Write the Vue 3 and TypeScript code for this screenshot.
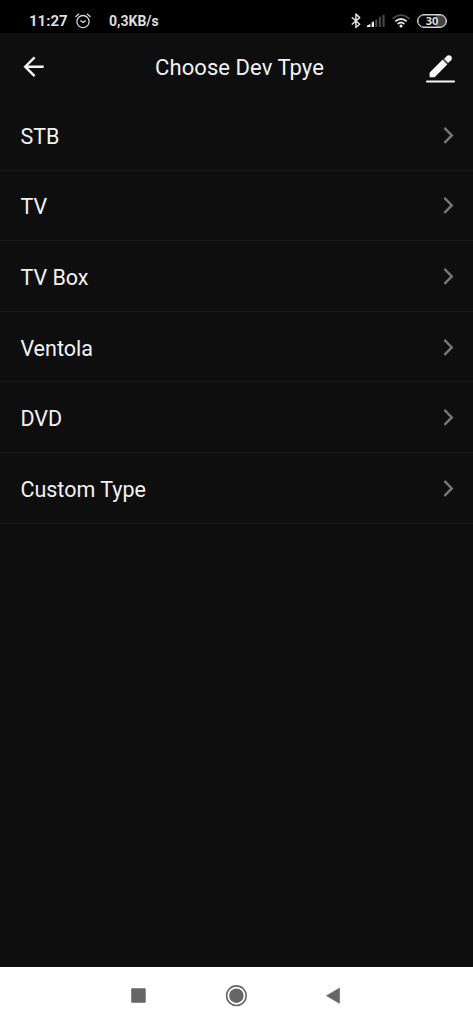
<script setup lang="ts">
const deviceTypes: string[] = ['STB', 'TV', 'TV Box', 'Ventola', 'DVD', 'Custom Type']
</script>

<template>
  <div class="screen">
    <div class="status">
      <span class="clock">11:27</span>
      <svg class="alarm" width="16" height="16" viewBox="0 0 16 16" fill="none" stroke="#d6d6d6" stroke-width="1.3" stroke-linecap="round">
        <circle cx="8" cy="8.6" r="6.1" />
        <path d="M.9 3.5 3.8 1.1M15.1 3.5 12.2 1.1M5.8 7.8 8 9.5 10.4 7.9" />
      </svg>
      <span class="speed">0,3KB/s</span>
      <div class="indicators">
        <svg width="10" height="16" viewBox="0 0 10 16" fill="none" stroke="#dedede" stroke-width="1.5" stroke-linejoin="round">
          <path d="M.8 4.3 8.7 11.2 4.9 14.5V1.1L8.7 4.6.8 11.5" />
        </svg>
        <svg class="signal" width="18" height="14" viewBox="0 0 18 14">
          <path d="M0 13V11.4L3.4 10V13Z" fill="#eee" />
          <path d="M4.6 13V8.4L7 7.2V13Z" fill="#eee" />
          <path d="M8.2 13V6L10.4 5.2V13ZM11.8 13V3.4L14 2.6V13ZM15.4 13V1.2L17.6.4V13Z" fill="#464646" />
        </svg>
        <svg class="wifi" width="18" height="14" viewBox="0 0 18 14" fill="none" stroke-width="1.8">
          <path d="M.6 4.7Q9-2.5 17.4 4.7" stroke="#484848" />
          <path d="M3.2 7.4Q9 2.5 14.8 7.4" stroke="#e2e2e2" />
          <path d="M5.6 10Q9 7.1 12.4 10" stroke="#e2e2e2" />
          <circle cx="9" cy="12" r="1.5" fill="#eee" />
        </svg>
        <div class="battery"><span>30</span></div>
      </div>
    </div>

    <header class="bar">
      <svg width="22" height="22" viewBox="0 0 22 22" fill="none" stroke="#f4f4f4" stroke-width="2.4">
        <path d="M20.7 10.7H2.4M11.6 1.3 2.2 10.7 11.6 20.1" />
      </svg>
      <h1>Choose Dev Tpye</h1>
      <svg class="edit" width="30" height="30" viewBox="0 0 30 30" fill="#f7f7f7">
        <path d="M5.2 23.7V19.8L17.6 7.4 21.6 11.4 9.2 23.7Z" stroke="#f7f7f7" stroke-width="1.2" stroke-linejoin="round" />
        <circle cx="23.9" cy="5.2" r="2.9" />
        <path d="M19 6 21.2 3.8 25.3 7.9 23.1 10.1Z" />
        <path d="M18.5 6.2 22.9 10.6" stroke="#777" stroke-width=".6" />
        <rect x="1" y="27.5" width="29" height="1.9" rx=".9" />
      </svg>
    </header>

    <ul class="list">
      <li v-for="type in deviceTypes" :key="type">
        <span>{{ type }}</span>
        <svg width="12" height="18" viewBox="0 0 12 18" fill="none" stroke="#777" stroke-width="2.4">
          <path d="M1.4 1.9 8.8 9.4 1.4 16.9" />
        </svg>
      </li>
    </ul>

    <nav class="nav">
      <svg width="16" height="16" viewBox="0 0 16 16"><rect x="1.2" y=".3" width="14.5" height="14.5" rx=".8" fill="#666" /></svg>
      <svg width="22" height="22" viewBox="0 0 22 22">
        <circle cx="11.4" cy="10.7" r="9.8" fill="none" stroke="#666" stroke-width="1.6" />
        <circle cx="11.4" cy="10.7" r="7.2" fill="#666" />
      </svg>
      <svg width="16" height="18" viewBox="0 0 16 18"><path d="M1.4 8.7 14.6 1V16.4Z" fill="#666" stroke="#666" stroke-width=".5" stroke-linejoin="round" /></svg>
    </nav>
  </div>
</template>

<style scoped>
.screen {
  display: flex;
  flex-direction: column;
  height: 1024px;
  background: #0e0e0e;
  color: #f2f2f2;
  font-family: Roboto, "Liberation Sans", sans-serif;
  overflow: hidden;
}
svg {
  display: block;
  flex: none;
}
.status {
  display: flex;
  align-items: center;
  box-sizing: border-box;
  height: 33px;
  padding: 8px 26px 0 29px;
  background: #000;
  color: #dedede;
  font-size: 15px;
  font-weight: 700;
  line-height: 18px;
}
.clock {
  width: 46px;
}
.speed {
  margin-left: 18px;
  font-size: 14px;
}
.indicators {
  display: flex;
  align-items: center;
  margin-left: auto;
}
.signal {
  margin-left: 6px;
}
.wifi {
  margin: 0 7px;
}
.battery {
  box-sizing: border-box;
  width: 30px;
  height: 14px;
  border: 1px solid #d4d4d4;
  border-radius: 7px;
  background: linear-gradient(90deg, #000 66%, #424242 66%);
  box-shadow: inset 0 0 0 0.5px #d4d4d4;
  font-family: "Open Sans", Roboto, sans-serif;
  font-size: 11px;
  line-height: 12px;
  text-align: center;
}
.bar {
  display: flex;
  align-items: center;
  justify-content: space-between;
  box-sizing: border-box;
  height: 67px;
  padding: 0 18px 0 23px;
}
.edit {
  margin: 3px 0 0;
}
h1 {
  margin: 2px 0 0 9px;
  font-size: 22px;
  font-weight: 400;
  line-height: 26px;
  letter-spacing: 0.07px;
}
.list {
  flex: 1;
  margin: 0;
  padding: 0;
  list-style: none;
}
.list li {
  display: flex;
  align-items: center;
  justify-content: space-between;
  box-sizing: border-box;
  height: 70.6px;
  padding: 0 18px 0 20.4px;
  border-bottom: 1px solid #191919;
  font-size: 21.5px;
  line-height: 26px;
}
.list span {
  padding-top: 4px;
}
.nav {
  display: flex;
  align-items: center;
  justify-content: space-between;
  box-sizing: border-box;
  height: 57px;
  padding: 1px 132px 0 130px;
  background: #fff;
}
</style>

<style>
body {
  margin: 0;
  background: #0e0e0e;
}
</style>
